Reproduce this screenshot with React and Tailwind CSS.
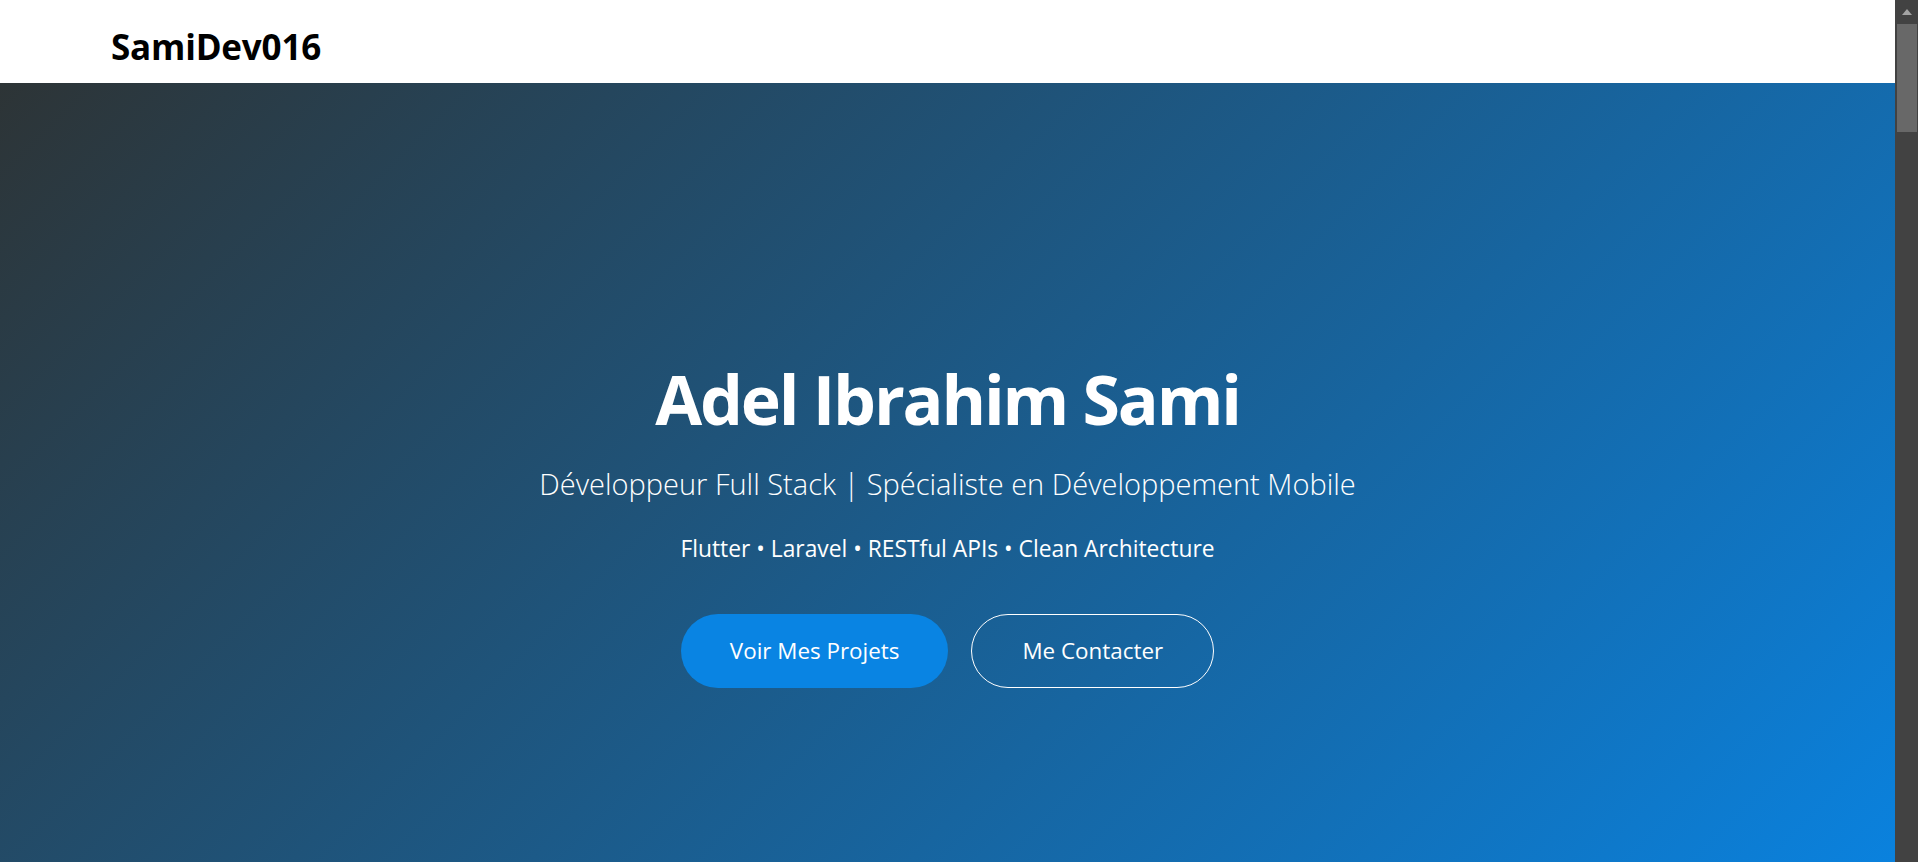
export default function App() {
  return (
    <div className="flex h-[862px] w-full overflow-hidden" style={{ fontFamily: '"Open Sans", "Noto Sans", sans-serif' }}>
      <div className="flex flex-1 flex-col">
        <header className="h-[83px] shrink-0 bg-white pl-[111px] pt-[29px]">
          <div className="text-[35px] font-bold leading-none tracking-[-0.2px] text-black">SamiDev016</div>
        </header>

        <section className="flex h-[862px] shrink-0 flex-col items-center bg-[linear-gradient(135deg,#2d3436_0%,#0984e3_100%)] pt-[282px] text-white">
          <h1 className="text-[68px] font-bold leading-none tracking-[-2.2px]">Adel Ibrahim Sami</h1>
          <p className="mt-[34px] text-[29px] font-light leading-[1.2]">
            Développeur Full Stack | Spécialiste en Développement Mobile
          </p>
          <p className="mt-[30px] text-[22.8px] font-medium leading-[1.5]">
            Flutter • Laravel • RESTful APIs • Clean Architecture
          </p>
          <div className="mt-[48px] flex gap-[23px]">
            <button className="h-[74px] rounded-full bg-[#0984e3] px-[49px] text-[22.4px] text-white">
              Voir Mes Projets
            </button>
            <button className="h-[74px] rounded-full border border-white px-[50px] text-[22.4px] text-white">
              Me Contacter
            </button>
          </div>
        </section>
      </div>

      <div className="flex w-[23px] shrink-0 flex-col items-center bg-[#424242]">
        <div className="mt-[9px] h-0 w-0 border-x-[5px] border-b-[6px] border-x-transparent border-b-[#a3a3a3]" />
        <div className="mt-[9px] h-[108px] w-[20px] bg-[#686868]" />
      </div>
    </div>
  );
}
